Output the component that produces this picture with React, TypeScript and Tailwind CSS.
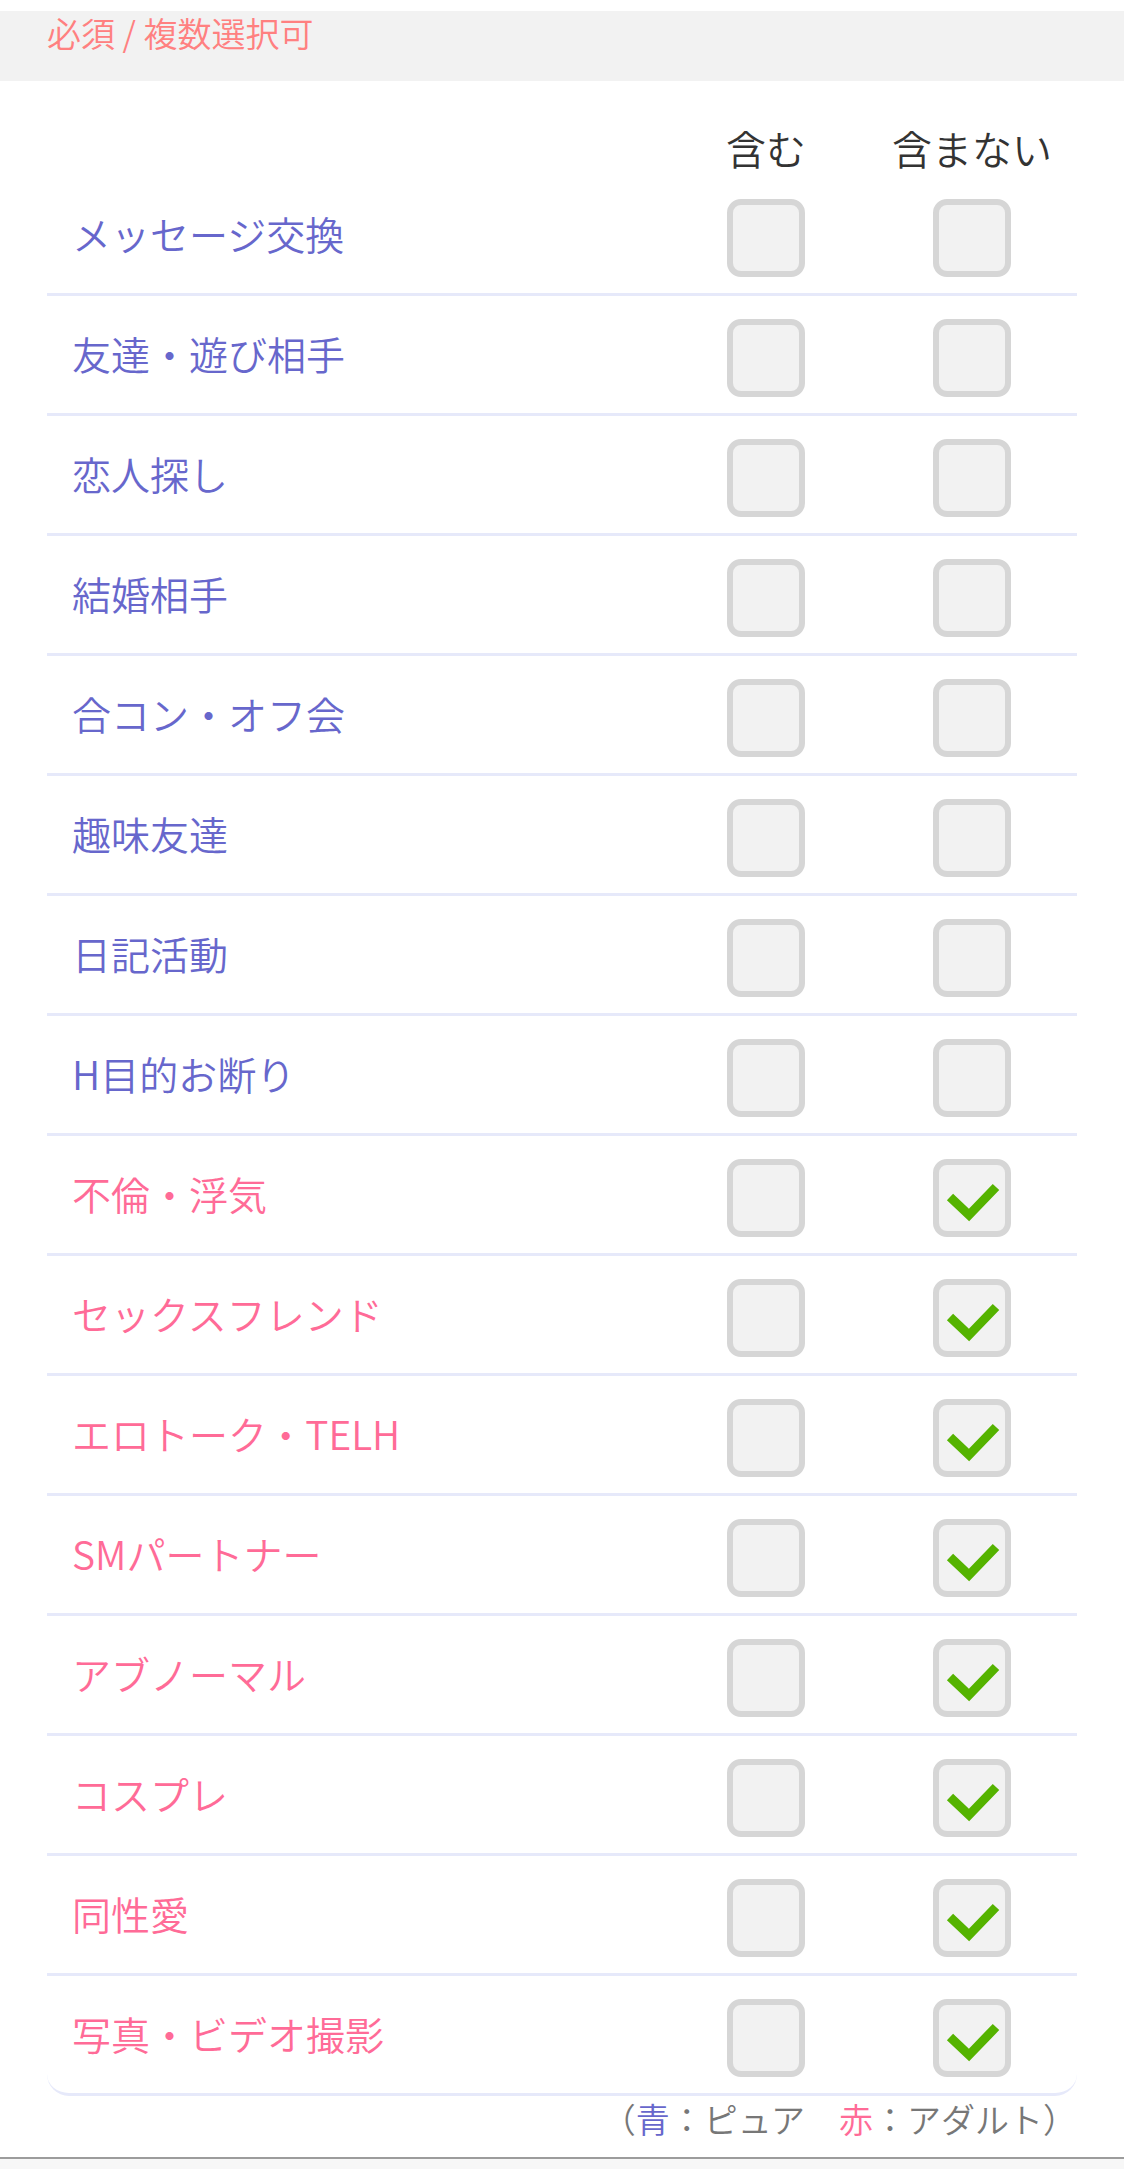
import React, { useState } from 'react';

type Purpose = { label: string; adult: boolean };

const PURPOSES: Purpose[] = [
  { label: 'メッセージ交換', adult: false },
  { label: '友達・遊び相手', adult: false },
  { label: '恋人探し', adult: false },
  { label: '結婚相手', adult: false },
  { label: '合コン・オフ会', adult: false },
  { label: '趣味友達', adult: false },
  { label: '日記活動', adult: false },
  { label: 'H目的お断り', adult: false },
  { label: '不倫・浮気', adult: true },
  { label: 'セックスフレンド', adult: true },
  { label: 'エロトーク・TELH', adult: true },
  { label: 'SMパートナー', adult: true },
  { label: 'アブノーマル', adult: true },
  { label: 'コスプレ', adult: true },
  { label: '同性愛', adult: true },
  { label: '写真・ビデオ撮影', adult: true },
];

const FONT = "font-['Hiragino_Sans','Noto_Sans_CJK_JP',sans-serif] font-[350]";

export default function App() {
  // include / exclude state per row, adult rows start excluded
  const [include, setInclude] = useState<boolean[]>(PURPOSES.map(() => false));
  const [exclude, setExclude] = useState<boolean[]>(PURPOSES.map((p) => p.adult));

  const toggle = (list: boolean[], set: (v: boolean[]) => void, i: number) => {
    const next = [...list];
    next[i] = !next[i];
    set(next);
  };

  return (
    <main className={`w-full min-h-screen bg-white ${FONT}`}>
      <div className="h-[11px] bg-white" />

      {/* Section heading */}
      <div className="h-[70px] bg-[#f2f2f2] pl-[47px] pt-[2px]">
        <span className="text-[34px] leading-[40px] text-[#ff8080]">必須 / 複数選択可</span>
      </div>

      <div className="px-[47px]">
        {/* Column header */}
        <div className="h-[95px] flex pt-[47px] pr-[2px]">
          <div className="flex-1" />
          <div className="w-[206px] text-center text-[40px] leading-[40px] text-[#333333]">含む</div>
          <div className="w-[206px] text-center text-[40px] leading-[40px] text-[#333333]">含まない</div>
        </div>

        {/* Rows */}
        <div className="flex flex-col">
          {PURPOSES.map((p, i) => (
            <div
              key={p.label}
              className={`h-[120px] flex items-center pt-[7px] pr-[2px] border-b-[3px] border-[#e6e9fa] ${
                i === PURPOSES.length - 1 ? 'rounded-b-[22px]' : ''
              }`}
            >
              <div
                className={`flex-1 pl-[25px] pb-[10px] text-[39px] leading-[44px] ${
                  p.adult ? 'text-[#ff6b97]' : 'text-[#6767cc]'
                }`}
              >
                {p.label}
              </div>
              <div className="w-[206px] flex justify-center">
                <CheckBox checked={include[i]} onClick={() => toggle(include, setInclude, i)} />
              </div>
              <div className="w-[206px] flex justify-center">
                <CheckBox checked={exclude[i]} onClick={() => toggle(exclude, setExclude, i)} />
              </div>
            </div>
          ))}
        </div>

        {/* Legend */}
        <div className="h-[61px] pt-[4px] text-right text-[34px] leading-[38px] text-[#777777]">
          （<span className="text-[#6767cc]">青</span>：ピュア　<span className="text-[#ff6b97]">赤</span>：アダルト）
        </div>
      </div>

      <div className="h-[2px] bg-[#9c9c9c]" />
      <div className="h-[10px] bg-[#f7f7f7]" />
    </main>
  );
}

function CheckBox({ checked, onClick }: { checked: boolean; onClick: () => void }) {
  return (
    <button
      onClick={onClick}
      className="w-[78px] h-[78px] rounded-[14px] border-[6px] border-[#d6d6d6] bg-[#f2f2f2] flex items-center justify-center"
    >
      {checked && (
        <svg width="66" height="66" viewBox="6 6 66 66" className="block">
          <polyline
            points="17,38 36,56 63,28"
            fill="none"
            stroke="#55b300"
            strokeWidth="9"
            strokeLinejoin="miter"
          />
        </svg>
      )}
    </button>
  );
}
